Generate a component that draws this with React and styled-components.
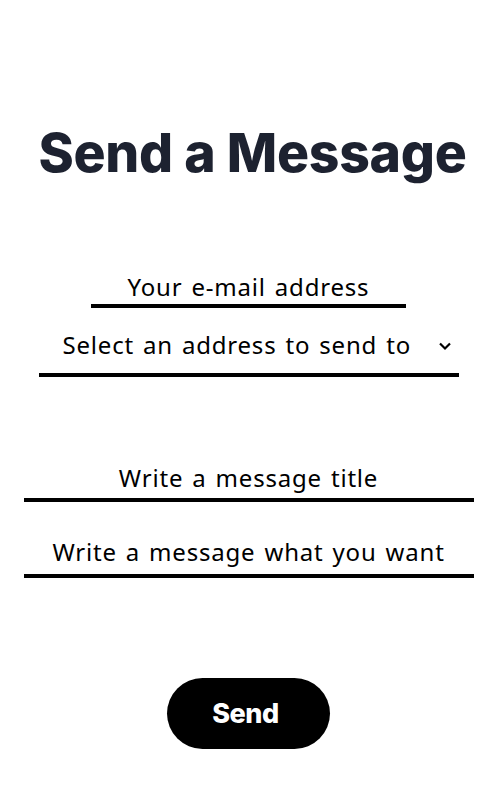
import styled, { createGlobalStyle } from "styled-components";

const GlobalStyle = createGlobalStyle`
  body {
    margin: 0;
    background: #fff;
    font-family: "Noto Sans", "Noto Sans CJK KR", sans-serif;
  }
`;

const Page = styled.form`
  display: flex;
  flex-direction: column;
  align-items: center;
  padding: 117px 3px 0 0;
`;

const Heading = styled.h1`
  margin: 0 0 79px;
  padding-left: 8px;
  font-family: Inter, "Noto Sans", sans-serif;
  font-weight: 800;
  font-size: 53.5px;
  line-height: 72px;
  letter-spacing: -0.3px;
  color: #1d2230;
`;

const Field = styled.input`
  box-sizing: border-box;
  width: ${(p) => p.$width}px;
  height: ${(p) => p.$height || 40}px;
  margin-top: ${(p) => p.$gap || 0}px;
  border: none;
  border-bottom: 4px solid #000;
  background: transparent;
  outline: none;
  padding: 0 0 ${(p) => p.$lift || 0}px;
  text-align: center;
  font-family: inherit;
  font-size: 24px;
  letter-spacing: 0.8px;
  word-spacing: 2px;
  color: #000;
  &::placeholder {
    color: #000;
  }
`;

const SelectWrap = styled.div`
  position: relative;
  width: 420px;
  margin-top: 8px;
`;

const Select = styled.select`
  box-sizing: border-box;
  width: 100%;
  height: 61px;
  appearance: none;
  border: none;
  border-bottom: 4px solid #000;
  background: transparent;
  outline: none;
  padding: 0 0 0 24px;
  font-family: inherit;
  font-size: 24px;
  letter-spacing: 0.8px;
  word-spacing: 2px;
  color: #000;
`;

const Chevron = styled.svg`
  position: absolute;
  right: 7px;
  top: 25px;
  pointer-events: none;
`;

const SendButton = styled.button`
  margin-top: 100px;
  width: 163px;
  height: 71px;
  border: none;
  border-radius: 36px;
  background: #000;
  color: #fff;
  font-family: Inter, "Noto Sans", sans-serif;
  font-weight: 800;
  font-size: 27px;
  letter-spacing: -0.5px;
  padding: 0 6px 0 0;
  cursor: pointer;
`;

export default function App() {
  return (
    <>
      <GlobalStyle />
      <Page onSubmit={(e) => e.preventDefault()}>
        <Heading>Send a Message</Heading>
        <Field $width={315} placeholder="Your e-mail address" />
        <SelectWrap>
          <Select defaultValue="">
            <option value="" disabled>
              Select an address to send to
            </option>
          </Select>
          <Chevron width="14" height="10" viewBox="0 0 14 10">
            <path d="M2 2.5 L7 7.5 L12 2.5" fill="none" stroke="#000" strokeWidth="2.2" />
          </Chevron>
        </SelectWrap>
        <Field $width={450} $gap={85} $lift={5} placeholder="Write a message title" />
        <Field $width={450} $height={42} $gap={34} $lift={7} placeholder="Write a message what you want" />
        <SendButton type="submit">Send</SendButton>
      </Page>
    </>
  );
}
